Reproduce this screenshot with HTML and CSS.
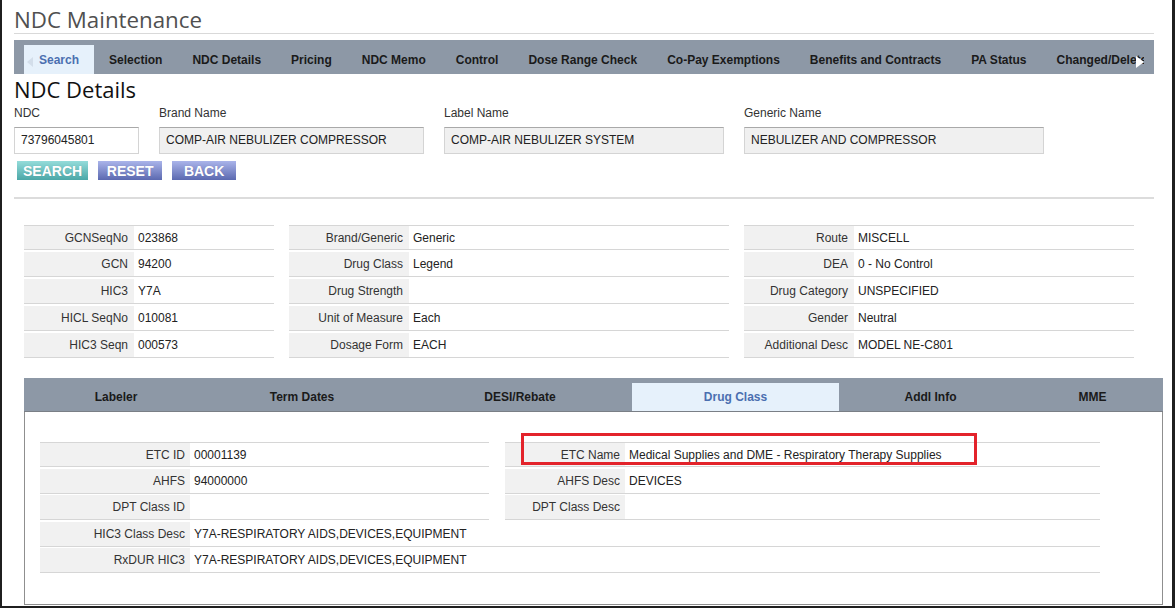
FILE: index.html
```html
<!DOCTYPE html>
<html>
<head>
<meta charset="utf-8">
<title>NDC Maintenance</title>
<link rel="stylesheet" href="styles.css">
</head>
<body>
<div class="frame">
  <h1 class="page-title">NDC Maintenance</h1>

  <nav class="main-tabs">
    <div class="tab-strip">
      <span class="tab active">Search</span>
      <span class="tab">Selection</span>
      <span class="tab">NDC Details</span>
      <span class="tab">Pricing</span>
      <span class="tab">NDC Memo</span>
      <span class="tab">Control</span>
      <span class="tab">Dose Range Check</span>
      <span class="tab">Co-Pay Exemptions</span>
      <span class="tab">Benefits and Contracts</span>
      <span class="tab">PA Status</span>
      <span class="tab">Changed/Delete</span>
    </div>
    <span class="arrow arrow-left"></span>
    <span class="arrow arrow-right"></span>
  </nav>

  <h2 class="section-title">NDC Details</h2>

  <div class="fields">
    <div class="field f-ndc">
      <label>NDC</label>
      <div class="input">73796045801</div>
    </div>
    <div class="field f-brand">
      <label>Brand Name</label>
      <div class="input disabled">COMP-AIR NEBULIZER COMPRESSOR</div>
    </div>
    <div class="field f-label">
      <label>Label Name</label>
      <div class="input disabled">COMP-AIR NEBULIZER SYSTEM</div>
    </div>
    <div class="field f-generic">
      <label>Generic Name</label>
      <div class="input disabled">NEBULIZER AND COMPRESSOR</div>
    </div>
  </div>

  <div class="buttons">
    <span class="btn btn-teal">SEARCH</span>
    <span class="btn btn-blue">RESET</span>
    <span class="btn btn-blue">BACK</span>
  </div>

  <div class="rule"></div>

  <div class="info-grid">
    <div class="lbl first">GCNSeqNo</div><div class="val first">023868</div><div class="sp"></div>
    <div class="lbl first">Brand/Generic</div><div class="val first">Generic</div><div class="sp"></div>
    <div class="lbl first">Route</div><div class="val first">MISCELL</div>

    <div class="lbl">GCN</div><div class="val">94200</div><div class="sp"></div>
    <div class="lbl">Drug Class</div><div class="val">Legend</div><div class="sp"></div>
    <div class="lbl">DEA</div><div class="val">0 - No Control</div>

    <div class="lbl">HIC3</div><div class="val">Y7A</div><div class="sp"></div>
    <div class="lbl">Drug Strength</div><div class="val"></div><div class="sp"></div>
    <div class="lbl">Drug Category</div><div class="val">UNSPECIFIED</div>

    <div class="lbl">HICL SeqNo</div><div class="val">010081</div><div class="sp"></div>
    <div class="lbl">Unit of Measure</div><div class="val">Each</div><div class="sp"></div>
    <div class="lbl">Gender</div><div class="val">Neutral</div>

    <div class="lbl">HIC3 Seqn</div><div class="val">000573</div><div class="sp"></div>
    <div class="lbl">Dosage Form</div><div class="val">EACH</div><div class="sp"></div>
    <div class="lbl">Additional Desc</div><div class="val">MODEL NE-C801</div>
  </div>

  <section class="sub-panel">
    <div class="sub-tabs">
      <span class="stab s1">Labeler</span>
      <span class="stab s2">Term Dates</span>
      <span class="stab s3">DESI/Rebate</span>
      <span class="stab s4 active">Drug Class</span>
      <span class="stab s5">Addl Info</span>
      <span class="stab s6">MME</span>
    </div>
    <div class="sub-body">
      <div class="class-grid">
        <div class="lbl first">ETC ID</div><div class="val first">00001139</div><div class="sp"></div>
        <div class="lbl first">ETC Name</div><div class="val first">Medical Supplies and DME - Respiratory Therapy Supplies</div>

        <div class="lbl">AHFS</div><div class="val">94000000</div><div class="sp"></div>
        <div class="lbl">AHFS Desc</div><div class="val">DEVICES</div>

        <div class="lbl">DPT Class ID</div><div class="val"></div><div class="sp"></div>
        <div class="lbl">DPT Class Desc</div><div class="val"></div>

        <div class="lbl">HIC3 Class Desc</div><div class="val wide">Y7A-RESPIRATORY AIDS,DEVICES,EQUIPMENT</div>

        <div class="lbl">RxDUR HIC3</div><div class="val wide">Y7A-RESPIRATORY AIDS,DEVICES,EQUIPMENT</div>

        <div class="highlight"></div>
      </div>
    </div>
  </section>
</div>
</body>
</html>
```

FILE: styles.css
```css
html, body {
  margin: 0;
  padding: 0;
  background: #ffffff;
}

.frame {
  box-sizing: border-box;
  width: 1175px;
  height: 608px;
  overflow: hidden;
  background: #ffffff;
  border-left: 2px solid #1f1f1f;
  border-right: 3px solid #1f1f1f;
  border-bottom: 2px solid #1f1f1f;
  padding: 0 18px 0 12px;
  font-family: "Liberation Sans", Arial, sans-serif;
  font-size: 12px;
  color: #333333;
}

.page-title {
  margin: 0;
  padding-top: 5px;
  height: 28px;
  line-height: 30px;
  font-family: "Open Sans", "Noto Sans", sans-serif;
  font-weight: 400;
  font-size: 22.3px;
  color: #505050;
  border-bottom: 1px solid #d9d9d9;
}

/* main tabs */
.main-tabs {
  position: relative;
  margin-top: 6px;
  height: 34px;
  background: #8d98a6;
  padding: 0 10px;
}

.tab-strip {
  display: flex;
  height: 34px;
  overflow: hidden;
  white-space: nowrap;
}

.tab {
  flex: none;
  margin-top: 5px;
  height: 29px;
  line-height: 30px;
  padding: 0 15px;
  font-weight: bold;
  font-size: 12px;
  color: #1a1a1a;
}

.tab.active {
  background: #e6f1fb;
  color: #4b6fb0;
}

.arrow {
  position: absolute;
  width: 0;
  height: 0;
  border-top: 5px solid transparent;
  border-bottom: 5px solid transparent;
}

.arrow-left {
  left: 13px;
  top: 17px;
  border-right: 6px solid #d3deea;
}

.arrow-right {
  right: 10px;
  top: 16px;
  border-top-width: 6px;
  border-bottom-width: 6px;
  border-left: 8px solid #ffffff;
}

/* section */
.section-title {
  margin: 0;
  height: 28px;
  line-height: 31px;
  font-family: "Open Sans", "Noto Sans", sans-serif;
  font-weight: 400;
  font-size: 22px;
  color: #111111;
}

.fields {
  display: flex;
  gap: 20px;
  margin-top: 4px;
}

.field label {
  display: block;
  height: 14px;
  line-height: 14px;
  color: #333333;
  margin-bottom: 7px;
}

.f-ndc { width: 125px; }
.f-brand { width: 265px; }
.f-label { width: 280px; }
.f-generic { width: 300px; }

.input {
  box-sizing: border-box;
  height: 27px;
  line-height: 25px;
  padding-left: 6px;
  border: 1px solid #d4d4d4;
  border-top-color: #a9a9a9;
  background: #ffffff;
  color: #222222;
  white-space: nowrap;
  overflow: hidden;
}

.input.disabled {
  background: #f0f0f0;
}

.buttons {
  display: flex;
  gap: 10px;
  margin-top: 7px;
  padding-left: 3px;
}

.btn {
  box-sizing: border-box;
  min-width: 64px;
  height: 19px;
  line-height: 20px;
  padding: 0 6px;
  text-align: center;
  font-weight: bold;
  font-size: 14px;
  color: #ffffff;
  text-shadow: 0 0 1px rgba(0,0,0,0.15);
}

.btn-teal {
  background: linear-gradient(#94dcda, #4ba7a7);
}

.btn-blue {
  background: linear-gradient(#aab4ea, #5b69b0);
}

.rule {
  margin-top: 17px;
  height: 2px;
  background: #dcdcdc;
}

/* upper info grid */
.info-grid {
  display: grid;
  grid-template-columns: 110px 140px 15px 120px 320px 15px 110px 280px;
  row-gap: 2px;
  margin: 26px 0 0 10px;
}

.lbl, .val {
  height: 24px;
  line-height: 25px;
  border-bottom: 1px solid #d6d6d6;
  white-space: nowrap;
  overflow: hidden;
}

.lbl.first, .val.first {
  height: 23px;
  border-top: 1px solid #d6d6d6;
}

.lbl {
  background: #f1f1f1;
  text-align: right;
  padding-right: 6px;
  color: #333333;
}

.val {
  padding-left: 4px;
  color: #222222;
}

.sp {
  height: 24px;
}

/* lower panel */
.sub-panel {
  margin: 20px 0 0 10px;
  width: 1139px;
}

.sub-tabs {
  display: flex;
  height: 34px;
  background: #8d98a6;
  border-bottom: 1px solid #7a7f86;
  box-sizing: border-box;
}

.stab {
  box-sizing: border-box;
  flex: none;
  margin-top: 5px;
  height: 28px;
  line-height: 29px;
  text-align: center;
  font-weight: bold;
  font-size: 12px;
  color: #1a1a1a;
}

.s1 { width: 184px; }
.s2 { width: 188px; }
.s3 { width: 236px; padding-left: 12px; }
.s4 { width: 207px; }
.s5 { width: 183px; }
.s6 { width: 141px; }

.stab.active {
  background: #e6f1fb;
  color: #4b6fb0;
}

.sub-body {
  box-sizing: border-box;
  height: 193px;
  border: 1px solid #8f8f8f;
  border-top: none;
  padding: 30px 0 0 15px;
}

.class-grid {
  position: relative;
  display: grid;
  grid-template-columns: 150px 299px 16px 120px 475px;
  row-gap: 1.5px;
}

.class-grid .lbl {
  padding-right: 5px;
}

.class-grid .val.wide {
  grid-column: 2 / span 4;
}

.highlight {
  position: absolute;
  left: 481px;
  top: -9px;
  width: 456px;
  height: 32px;
  box-sizing: border-box;
  border: 3px solid #e3232b;
}
```
